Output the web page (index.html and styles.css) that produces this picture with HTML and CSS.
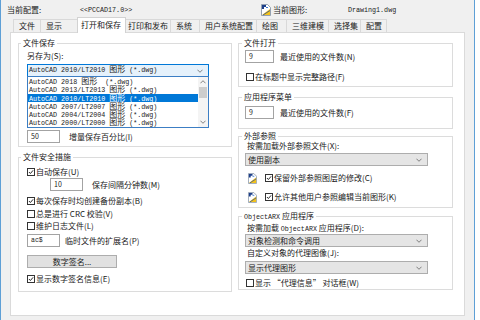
FILE: index.html
```html
<!DOCTYPE html>
<html lang="zh-CN">
<head>
<meta charset="utf-8">
<title>选项</title>
<link rel="stylesheet" href="styles.css">
</head>
<body>
<div class="window">
  <div class="hdr">
    <span class="hdr-label">当前配置:</span>
    <span class="hdr-value mono">&lt;&lt;PCCAD17.0&gt;&gt;</span>
    <svg class="dwg-icon" viewBox="0 0 10 12"><path d="M0.5 0.5h6l3 3v8h-9z" fill="#fff" stroke="#7a8aa0" stroke-width="0.8"/><path d="M1 1h4v2H3v2H1z" fill="#1d3f8a"/><path d="M5 3h2v1H5z" fill="#3a79d0"/><path d="M1 11L9 5v6z" fill="#f3c21a"/><path d="M2 11L9 6.5" stroke="#2a4f9a" stroke-width="0.8"/></svg>
    <span class="hdr-label2">当前图形:</span>
    <span class="mono">Drawing1.dwg</span>
  </div>

  <div class="tabs">
    <div class="tab t-file">文件</div>
    <div class="tab t-disp">显示</div>
    <div class="tab t-open active">打开和保存</div>
    <div class="tab t-plot">打印和发布</div>
    <div class="tab t-sys">系统</div>
    <div class="tab t-user">用户系统配置</div>
    <div class="tab t-draw">绘图</div>
    <div class="tab t-3d">三维建模</div>
    <div class="tab t-sel">选择集</div>
    <div class="tab t-prof">配置</div>
  </div>

  <div class="panel">
    <div class="col col-left">
      <fieldset class="grp grp-l g-save">
        <legend>文件保存</legend>
        <div class="lbl m-saveas">另存为(S):</div>
        <div class="combo">
          <div class="select focus mono">AutoCAD 2010/LT2010 <span class="han">图形</span> (*.dwg)<svg class="chev" viewBox="0 0 7 4"><path d="M0.5 0.5L3.5 3.5L6.5 0.5"/></svg></div>
          <div class="droplist">
            <div class="items">
              <div class="item mono">AutoCAD 2018 <span class="han">图形</span>&nbsp; (*.dwg)</div>
              <div class="item mono">AutoCAD 2013/LT2013 <span class="han">图形</span> (*.dwg)</div>
              <div class="item mono selected">AutoCAD 2010/LT2010 <span class="han">图形</span> (*.dwg)</div>
              <div class="item mono">AutoCAD 2007/LT2007 <span class="han">图形</span> (*.dwg)</div>
              <div class="item mono">AutoCAD 2004/LT2004 <span class="han">图形</span> (*.dwg)</div>
              <div class="item mono">AutoCAD 2000/LT2000 <span class="han">图形</span> (*.dwg)</div>
              <div class="item mono">AutoCAD R14/LT98/LT97 <span class="han">图形</span> (*.dwg)</div>
            </div>
            <div class="sbar">
              <svg class="sarrow" viewBox="0 0 7 4"><path d="M0.5 3.5L3.5 0.5L6.5 3.5"/></svg>
              <div class="thumb"></div>
              <svg class="sarrow down" viewBox="0 0 7 4"><path d="M0.5 0.5L3.5 3.5L6.5 0.5"/></svg>
            </div>
          </div>
        </div>
        <div class="under">
          <div class="row m-u1"><span class="cb on"><svg viewBox="0 0 8 8"><path d="M1.2 4L3.2 6L6.8 1.8"/></svg></span>保持注释性对象的视觉逼真度(Y)</div>
          <div class="row m-u2"><span class="cb on"><svg viewBox="0 0 8 8"><path d="M1.2 4L3.2 6L6.8 1.8"/></svg></span>保持图形尺寸兼容性(G)</div>
          <div class="btn btn-thumb m-u3">缩略图预览设置(T)...</div>
        </div>
        <div class="row m-50"><span class="tb tb-l">50</span><span class="gap9">增量保存百分比(I)</span></div>
      </fieldset>

      <fieldset class="grp grp-l g-safe">
        <legend>文件安全措施</legend>
        <div class="row m-s1"><span class="cb on"><svg viewBox="0 0 8 8"><path d="M1.2 4L3.2 6L6.8 1.8"/></svg></span>自动保存(U)</div>
        <div class="row m-s2"><span class="tb tb-l ind">10</span><span class="gap9">保存间隔分钟数(M)</span></div>
        <div class="row m-s3"><span class="cb on"><svg viewBox="0 0 8 8"><path d="M1.2 4L3.2 6L6.8 1.8"/></svg></span>每次保存时均创建备份副本(B)</div>
        <div class="row m-s4"><span class="cb"></span>总是进行 CRC 校验(V)</div>
        <div class="row m-s5"><span class="cb"></span>维护日志文件(L)</div>
        <div class="row m-s6"><span class="tb tb-l mono-s">ac$</span><span class="gap5">临时文件的扩展名(P)</span></div>
        <div class="btn btn-sign m-s7">数字签名...</div>
        <div class="row m-s8"><span class="cb on"><svg viewBox="0 0 8 8"><path d="M1.2 4L3.2 6L6.8 1.8"/></svg></span>显示数字签名信息(E)</div>
      </fieldset>
    </div>

    <div class="col col-right">
      <fieldset class="grp grp-r g-open">
        <legend>文件打开</legend>
        <div class="row m-o1"><span class="tb tb-r">9</span><span class="gap6">最近使用的文件数(N)</span></div>
        <div class="row m-o2 ind1"><span class="cb"></span>在标题中显示完整路径(F)</div>
      </fieldset>

      <fieldset class="grp grp-r g-menu">
        <legend>应用程序菜单</legend>
        <div class="row m-a1"><span class="tb tb-r">9</span><span class="gap6">最近使用的文件数(F)</span></div>
      </fieldset>

      <fieldset class="grp grp-r g-xref">
        <legend>外部参照</legend>
        <div class="lbl ind2">按需加载外部参照文件(X):</div>
        <div class="select plain m-x1">使用副本<svg class="chev" viewBox="0 0 7 4"><path d="M0.5 0.5L3.5 3.5L6.5 0.5"/></svg></div>
        <div class="row irow m-x2">
          <svg class="xicon" viewBox="0 0 10 12"><path d="M0.5 0.5h6l3 3v8h-9z" fill="#fff" stroke="#7a8aa0" stroke-width="0.8"/><path d="M1 1h4v2H3v2H1z" fill="#1d3f8a"/><path d="M5 3h2v1H5z" fill="#3a79d0"/><path d="M1 11L9 5v6z" fill="#f3c21a"/><path d="M2 11L9 6.5" stroke="#2a4f9a" stroke-width="0.8"/></svg>
          <span class="cb on"><svg viewBox="0 0 8 8"><path d="M1.2 4L3.2 6L6.8 1.8"/></svg></span>保留外部参照图层的修改(C)
        </div>
        <div class="row irow m-x3">
          <svg class="xicon" viewBox="0 0 10 12"><path d="M0.5 0.5h6l3 3v8h-9z" fill="#fff" stroke="#7a8aa0" stroke-width="0.8"/><path d="M1 1h4v2H3v2H1z" fill="#1d3f8a"/><path d="M5 3h2v1H5z" fill="#3a79d0"/><path d="M1 11L9 5v6z" fill="#f3c21a"/><path d="M2 11L9 6.5" stroke="#2a4f9a" stroke-width="0.8"/></svg>
          <span class="cb on"><svg viewBox="0 0 8 8"><path d="M1.2 4L3.2 6L6.8 1.8"/></svg></span>允许其他用户参照编辑当前图形(K)
        </div>
      </fieldset>

      <fieldset class="grp grp-r g-arx">
        <legend><span class="mono arx">ObjectARX</span> 应用程序</legend>
        <div class="lbl ind2 m-r1">按需加载 <span class="mono arx">ObjectARX</span> 应用程序(D):</div>
        <div class="select plain m-r2">对象检测和命令调用<svg class="chev" viewBox="0 0 7 4"><path d="M0.5 0.5L3.5 3.5L6.5 0.5"/></svg></div>
        <div class="lbl ind2 m-r3">自定义对象的代理图像(J):</div>
        <div class="select plain m-r4">显示代理图形<svg class="chev" viewBox="0 0 7 4"><path d="M0.5 0.5L3.5 3.5L6.5 0.5"/></svg></div>
        <div class="row m-r5 ind1"><span class="cb"></span>显示 “代理信息” 对话框(W)</div>
      </fieldset>
    </div>
  </div>
</div>
</body>
</html>
```

FILE: styles.css
```css
* { box-sizing: border-box; }
html, body { margin: 0; padding: 0; }
body {
  width: 480px;
  height: 320px;
  overflow: hidden;
  background: #ffffff;
  font-family: "Noto Sans CJK SC", "Noto Sans", sans-serif;
  font-size: 8px;
  line-height: 10px;
  color: #202020;
}
.mono {
  font-family: "Liberation Mono", "Noto Sans CJK SC", monospace;
  font-size: 6.7px;
  white-space: nowrap;
}
.han { font-family: "Noto Sans CJK SC", sans-serif; font-size: 8px; line-height: 8px; }
.arx { font-size: 6.7px; }

.window {
  width: 475px;
  height: 320px;
  background: #f0f0f0;
  border-left: 1px solid #5e9fd6;
  border-right: 1px solid #5e9fd6;
}

/* header */
.hdr {
  display: flex;
  align-items: center;
  height: 17px;
  padding: 3px 0 0 6px;
}
.hdr-label { width: 73px; }
.hdr-value { width: 181px; }
.dwg-icon { width: 10px; height: 12px; margin-right: 2px; flex: none; }
.hdr-label2 { width: 75px; }

/* tabs */
.tabs {
  display: flex;
  align-items: flex-end;
  height: 15px;
  padding-left: 12px;
  position: relative;
  z-index: 2;
}
.tab {
  height: 13px;
  border: 1px solid #d9d9d9;
  border-bottom: 0;
  margin-right: -1px;
  padding-left: 5px;
  line-height: 11px;
  white-space: nowrap;
  background: #f0f0f0;
  flex: none;
}
.t-file { width: 28px; }
.t-disp { width: 39px; }
.t-plot { width: 49px; }
.t-sys { width: 30px; }
.t-user { width: 58px; }
.t-draw { width: 31px; }
.t-3d { width: 43px; }
.t-sel { width: 33px; }
.t-prof { width: 27px; }
.tab.active {
  width: 49px;
  height: 16px;
  margin: 0 -4px -1px -1px;
  padding-left: 3px;
  line-height: 14px;
  background: #ffffff;
  border-color: #d2d2d2;
  position: relative;
  z-index: 1;
}

/* panel */
.panel {
  margin-left: 9px;
  width: 455px;
  height: 284px;
  background: #ffffff;
  border: 1px solid #dadada;
  display: flex;
  gap: 6px;
  padding: 5px 0 0 7px;
}
.col { display: flex; flex-direction: column; }
.col-left { width: 214px; }
.col-right { width: 215px; }

.grp {
  margin: 0;
  border: 1px solid #dcdcdc;
  min-width: 0;
  display: block;
}
.grp legend {
  padding: 0 2px;
  line-height: 10px;
  font-size: 8px;
}
.grp-l { padding: 0 6px 0 8px; }
.grp-l legend { margin-left: -6px; }
.grp-r { padding: 0 6px 0 6px; }
.grp-r legend { margin-left: -3px; }

.row { display: flex; align-items: center; white-space: nowrap; }
.lbl { height: 10px; white-space: nowrap; }

.cb {
  width: 8px;
  height: 8px;
  border: 1px solid #333333;
  background: #ffffff;
  margin-right: 1px;
  flex: none;
  display: inline-flex;
  align-items: center;
  justify-content: center;
}
.cb svg { width: 6px; height: 6px; display: block; }
.cb svg path { fill: none; stroke: #222222; stroke-width: 1.3; }

.tb {
  display: inline-block;
  height: 13px;
  border: 1px solid #a3a3a3;
  background: #ffffff;
  padding-left: 3px;
  line-height: 11px;
  font-size: 7px;
  flex: none;
}
.tb-l { width: 33px; }
.tb-r { width: 29px; }
.mono-s { font-family: "Liberation Mono", monospace; font-size: 6.5px; }
.ind { margin-left: 23px; }
.gap9 { margin-left: 9px; }
.gap6 { margin-left: 6px; }
.gap5 { margin-left: 5px; }
.ind1 { padding-left: 1px; }
.ind2 { padding-left: 2px; }

.btn {
  height: 13px;
  border: 1px solid #adadad;
  background: #e1e1e1;
  text-align: center;
  line-height: 11px;
  white-space: nowrap;
}
.btn-sign { width: 90px; }
.btn-thumb { width: 120px; margin-left: 40px; }

/* selects */
.select {
  position: relative;
  height: 13px;
  line-height: 11px;
  border: 1px solid #adadad;
  background: #e5e5e5;
  padding-left: 2px;
  white-space: nowrap;
}
.select.focus {
  width: 182px;
  background: #e5f1fb;
  border-color: #0078d7;
  padding-left: 1px;
}
.select.plain { width: 183px; }
.chev {
  position: absolute;
  right: 5px;
  top: 4px;
  width: 6px;
  height: 4px;
}
.chev path, .sarrow path { fill: none; stroke: #606060; stroke-width: 0.9; }

.combo { position: relative; margin-top: 3px; }
.droplist {
  position: absolute;
  left: 0;
  top: 12px;
  width: 182px;
  height: 52px;
  border: 1px solid #3c7ec4;
  background: #ffffff;
  z-index: 5;
  display: flex;
  overflow: hidden;
}
.items { flex: 1; overflow: hidden; }
.item {
  display: block;
  height: 8.3px;
  line-height: 8.3px;
  padding-left: 1px;
  color: #1a1a1a;
  overflow: visible;
}
.item.selected { background: #0078d7; color: #ffffff; }
.sbar {
  width: 10px;
  flex: none;
  background: #f4f4f4;
  display: flex;
  flex-direction: column;
  align-items: center;
  padding-top: 3px;
}
.sarrow { width: 6px; height: 4px; flex: none; }
.sarrow.down { margin-top: auto; margin-bottom: 3px; }
.thumb { width: 8px; height: 11px; background: #cdcdcd; margin-top: 3px; }

.under { height: 49px; }
.xicon { width: 9px; height: 11px; margin: 0 8px 0 3px; flex: none; }
.irow { height: 12px; }

/* vertical rhythm - left */
.m-saveas { margin-top: 3px; }
.m-u1 { margin-top: 4px; }
.m-u2 { margin-top: 2px; }
.m-u3 { margin-top: 5px; }
.m-50 { margin-bottom: 3px; }
.g-safe { margin-top: 5px; padding-bottom: 7px; }
.m-s1 { margin-top: 5px; }
.m-s2 { margin-top: 1px; }
.m-s3 { margin-top: 5px; }
.m-s4 { margin-top: 3px; }
.m-s5 { margin-top: 2px; }
.m-s6 { margin-top: 3px; }
.m-s7 { margin-top: 8px; }
.m-s8 { margin-top: 6px; }

/* vertical rhythm - right */
.g-open { padding-bottom: 4px; }
.m-o1 { margin-top: 2px; }
.m-o2 { margin-top: 9px; }
.g-menu { margin-top: 5px; padding-bottom: 9px; }
.m-a1 { margin-top: 4px; }
.g-xref { margin-top: 2px; padding-bottom: 4px; }
.m-x1 { margin-top: 2px; }
.m-x2 { margin-top: 6px; }
.m-x3 { margin-top: 7px; }
.g-arx { margin-top: 3px; padding-bottom: 1px; }
.m-r1 { margin-top: 1px; }
.m-r2 { margin-top: 1px; }
.m-r3 { margin-top: 1px; }
.m-r4 { margin-top: 3px; }
.m-r5 { margin-top: 4px; }
```
